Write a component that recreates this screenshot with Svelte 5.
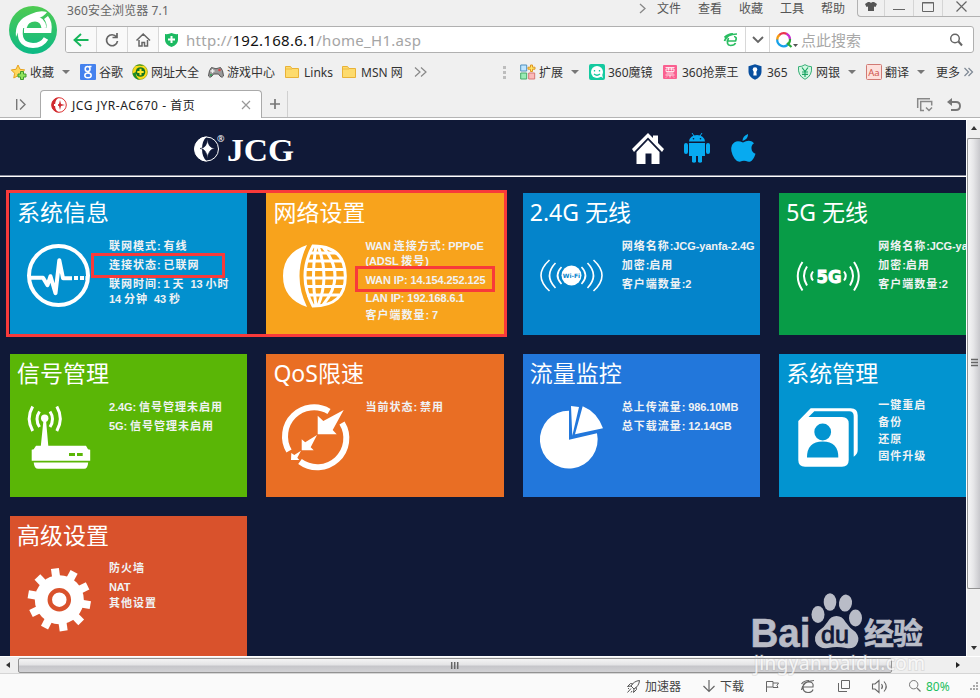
<script>
  let menus = ['文件', '查看', '收藏', '工具', '帮助'];

  let leftMarks = [
    { icon: 'star', label: '收藏', caret: true },
    { icon: 'google', label: '谷歌' },
    { icon: 'sites', label: '网址大全' },
    { icon: 'game', label: '游戏中心' },
    { icon: 'folder', label: 'Links' },
    { icon: 'folder', label: 'MSN 网' },
  ];

  let rightMarks = [
    { icon: 'ext', label: '扩展', caret: true },
    { icon: 'mirror', label: '360魔镜' },
    { icon: 'ticket', label: '360抢票王' },
    { icon: 'lock', label: '365' },
    { icon: 'bank', label: '网银', caret: true },
    { icon: 'trans', label: '翻译', caret: true },
  ];

  // each line is [text, space above it]
  let tiles = [
    { icon: 'pulse', title: '系统信息', color: '#0290ce', lines: [['联网模式: 有线', 3], ['连接状态: 已联网', 4], ['联网时间: 1 天  13 小时', 4], ['14 分钟  43 秒', 0]] },
    { icon: 'globe', title: '网络设置', color: '#f8a31c', lines: [['WAN 连接方式: PPPoE', 3], ['(ADSL 拨号)', 0], ['WAN IP: 14.154.252.125', 4], ['LAN IP: 192.168.6.1', 3], ['客户端数量: 7', 2]] },
    { icon: 'wifi', title: '2.4G 无线', color: '#0484cb', lines: [['网络名称:JCG-yanfa-2.4G', 3], ['加密:启用', 4], ['客户端数量:2', 4]] },
    { icon: 'five', title: '5G 无线', color: '#089c47', lines: [['网络名称:JCG-yanfa-5G', 3], ['加密:启用', 4], ['客户端数量:2', 4]] },
    { icon: 'router', title: '信号管理', color: '#5ab606', lines: [['2.4G: 信号管理未启用', 3], ['5G: 信号管理未启用', 4]] },
    { icon: 'qos', title: 'QoS限速', color: '#e96e24', lines: [['当前状态: 禁用', 3]] },
    { icon: 'pie', title: '流量监控', color: '#2277db', lines: [['总上传流量: 986.10MB', 3], ['总下载流量: 12.14GB', 4]] },
    { icon: 'user', title: '系统管理', color: '#0294d0', lines: [['一键重启', 1], ['备份', 2], ['还原', 2], ['固件升级', 2]] },
    { icon: 'gear', title: '高级设置', color: '#d9522c', lines: [['防火墙', 2], ['NAT', 4], ['其他设置', 1]] },
  ];

  let teeth = Array.from({ length: 10 }, (_, i) => i * 36 - 8);

  // chinese runs get wider tracking than latin ones
  function runs(text) {
    return text.split(/([\u4e00-\u9fff]+)/).filter(Boolean);
  }

  function isHan(s) {
    return /[\u4e00-\u9fff]/.test(s);
  }
</script>

<style>
  :global(body) {
    margin: 0;
    font: 12px "Noto Sans", "Noto Sans CJK SC", sans-serif;
  }

  svg {
    display: block;
    flex: none;
    overflow: visible;
  }

  .window {
    display: flex;
    flex-direction: column;
    width: 980px;
    height: 698px;
    overflow: hidden;
    background: #f0f0f0;
    color: #333;
  }

  .top {
    display: flex;
    height: 58px;
  }

  .brand {
    padding: 6px 8px 0 9px;
  }

  .top-main {
    flex: 1;
  }

  .titlebar {
    display: flex;
    height: 26px;
    color: #6b6b6b;
    line-height: 17px;
  }

  .app-name {
    margin: 2px auto 0 2px;
    letter-spacing: 0.1px;
    color: #666;
  }

  .menus {
    display: flex;
    gap: 17px;
    color: #555;
  }

  .menus svg {
    margin: 4px -6px 0 0;
  }

  .controls {
    display: grid;
    grid-template-columns: 27px 29px 29px 37px;
    height: 16px;
    margin-left: 12px;
    border: solid #b2b2b2;
    border-width: 0 0 1px 1px;
    border-radius: 0 0 0 4px;
  }

  .controls span {
    display: flex;
    justify-content: center;
    border-right: 1px solid #d5d5d5;
  }

  .controls span:last-child {
    border: none;
  }

  .address {
    display: flex;
    align-items: center;
    box-sizing: border-box;
    width: 909px;
    height: 27px;
    overflow: hidden;
    border: 1px solid #b0b0b0;
    border-radius: 3px;
    background: #fff;
  }

  .nav {
    display: flex;
    align-items: center;
    justify-content: center;
    width: 30px;
    height: 25px;
    border-right: 1px solid #d8d8d8;
    background: #f9f9f9;
  }

  .shield {
    margin: 0 8px 0 6px;
  }

  .url {
    flex: 1;
    color: #a5a5a5;
    font-size: 15px;
    letter-spacing: 0.28px;
    white-space: nowrap;
  }

  .url b {
    color: #111;
    font-weight: normal;
  }

  .drop {
    display: flex;
    align-items: center;
    justify-content: center;
    width: 23px;
    height: 25px;
    margin: 0 6px 0 5px;
    border: solid #d8d8d8;
    border-width: 0 1px;
  }

  .search {
    width: 149px;
    margin-left: 6px;
    color: #a8a8a8;
    font-size: 15px;
  }

  .address .find {
    margin-right: 11px;
  }

  .marks {
    display: flex;
    justify-content: space-between;
    height: 32px;
    padding: 0 6px 0 11px;
  }

  .group {
    display: grid;
    align-items: center;
    height: 28px;
    white-space: nowrap;
  }

  .left {
    grid-template-columns: 69px 52px 76px 77px 57px 72px 16px;
  }

  .right {
    grid-template-columns: 18px 69px 74px 85px 49px 69px 70px 38px;
  }

  .mark {
    display: flex;
    align-items: center;
    gap: 3px;
  }

  .caret {
    margin-left: 5px;
    border: 4px solid transparent;
    border-top-color: #777;
    border-bottom: none;
  }

  .more {
    display: flex;
    align-items: center;
    gap: 4px;
  }

  .tabs {
    display: flex;
    align-items: flex-end;
    height: 27px;
    border-bottom: 1px solid #b4b4b4;
    box-shadow: 0 2px #fff;
    margin-bottom: 2px;
  }

  .tabs > svg {
    align-self: center;
    position: relative;
    top: 1px;
  }

  .side {
    margin: 0 14px 0 16px;
  }

  .undo {
    margin: 0 19px 0 14px;
  }

  .tab {
    display: flex;
    align-items: center;
    box-sizing: border-box;
    width: 222px;
    height: 28px;
    margin-bottom: -1px;
    padding: 0 11px 0 10px;
    border: 1px solid #aaa;
    border-bottom: none;
    border-radius: 4px 4px 0 0;
    background: #fff;
    color: #222;
  }

  .tab span {
    flex: 1;
    margin-left: 5px;
    letter-spacing: 0.54px;
    white-space: nowrap;
  }

  .plus {
    display: flex;
    align-items: center;
    justify-content: center;
    width: 25px;
    height: 26px;
    margin-right: auto;
    border-right: 1px solid #d0d0d0;
  }

  .view {
    position: relative;
    display: grid;
    grid-template-columns: 966px 14px;
    height: 536px;
  }

  .page {
    overflow: hidden;
    background: #101937;
  }

  .banner {
    display: flex;
    align-items: center;
    box-sizing: border-box;
    height: 57px;
    padding-left: 193px;
    border-bottom: 1px solid #fff;
    box-shadow: inset 0 -1px #8a8d9d;
  }

  .banner svg {
    margin-right: 20px;
  }

  .banner .logo {
    margin-right: 338px;
  }

  .tiles {
    display: grid;
    grid-template-columns: repeat(4, 237.4px);
    grid-auto-rows: 142.3px;
    gap: 19px;
    padding: 16px 0 0 10px;
  }

  .tile {
    color: #fff;
  }

  .tile h2 {
    margin: 0 0 0 7px;
    height: 50px;
    font-size: 23px;
    font-weight: 400;
    line-height: 39px;
    white-space: nowrap;
  }

  .body {
    display: flex;
    gap: 18px;
    padding-left: 17px;
  }

  .lines {
    margin-top: -7px;
    color: #f0f2f4;
    font: bold 11px "Liberation Sans", "Noto Sans CJK SC", sans-serif;
    letter-spacing: -0.1px;
  }

  .lines div {
    height: 15px;
    line-height: 15px;
    white-space: pre;
  }

  .lines .han {
    letter-spacing: 1px;
  }

  .frame {
    position: absolute;
    box-sizing: border-box;
    border: 3px solid #f83a3a;
  }

  .frame.big {
    left: 6px;
    top: 70px;
    width: 501px;
    height: 147px;
  }

  .frame.state {
    left: 91px;
    top: 133px;
    width: 134px;
    height: 25px;
  }

  .frame.ip {
    left: 355px;
    top: 146px;
    width: 140px;
    height: 26px;
  }

  .watermark {
    position: absolute;
    left: 750px;
    top: 470px;
  }

  .bar {
    display: flex;
    align-items: center;
    justify-content: space-between;
    background: #efefef;
  }

  .vertical {
    flex-direction: column;
    border-left: 1px solid #fff;
  }

  .vertical .thumb {
    box-sizing: border-box;
    width: 13px;
    height: 451px;
    margin: 2px 0 auto;
    border: 1px solid #929292;
    border-right: none;
    border-radius: 2px 0 0 2px;
    background: linear-gradient(90deg, #f6f6f6, #e6e6e8 45%, #c8c8cc);
  }

  .vertical .end {
    margin: 6px 0;
  }

  .horizontal {
    height: 17px;
    border-top: 1px solid #fff;
    box-sizing: border-box;
  }

  .horizontal .thumb {
    box-sizing: border-box;
    width: 874px;
    height: 15px;
    margin: 0 auto 0 8px;
    border: 1px solid #929292;
    border-radius: 2px;
    background: linear-gradient(#f4f4f4, #e4e4e6 45%, #c6c6ca 55%, #d2d2d5);
  }

  .thumb {
    display: flex;
    align-items: center;
    justify-content: center;
  }

  .horizontal > svg:first-child {
    margin-left: 6px;
  }

  .horizontal .end {
    margin-right: 20px;
  }

  .status {
    display: grid;
    grid-template-columns: 76px 63px 35px 37px 34px 37px 61px 11px;
    align-items: center;
    flex: 1;
    padding-left: 627px;
    border-top: 1px solid #d5d5d5;
    background: #fafafa;
    color: #444;
  }

  .status span {
    display: flex;
    align-items: center;
    gap: 5px;
    white-space: nowrap;
  }

  .status .zoom {
    color: #1dbf60;
  }
</style>

{#snippet markIcon(name)}
  <svg width="16" height="16" viewBox="0 0 16 16">
    {#if name === 'star'}
      <path d="M7 1l2 4.300 4.700.6-3.400 3.300.8 4.800L7 11.700 2.800 14l.8-4.800L.3 5.900 5 5.300z" fill="#ffd75e" stroke="#e8a21c" />
      <path d="M9.500 7.500h3v2.500h2.500v3h-2.500v2.500h-3v-2.500H7v-3h2.500z" fill="#8ee35c" stroke="#3c9a2e" />
    {:else if name === 'google'}
      <rect width="16" height="16" rx="1" fill="#4582ee" />
      <g fill="none" stroke="#fff" stroke-width="1.500">
        <ellipse cx="7.600" cy="5" rx="2.400" ry="2.500" />
        <ellipse cx="8" cy="11.400" rx="3.200" ry="2.300" />
        <path d="M7.500 7.500l1.500 1.800M9 2.500h2.500" />
      </g>
    {:else if name === 'sites'}
      <circle cx="8" cy="8" r="7.500" fill="#f9dc16" stroke="#7c9a1a" stroke-width=".6" />
      <path d="M.6 9.500A7.800 7.800 0 0 0 8 15.700Q3 13 4 8zM3 2a7.800 7.800 0 0 1 9 0Q7 1 3 2" fill="#1c8e26" />
      <circle cx="8.500" cy="8" r="4.800" fill="#147422" />
      <path d="M8.500 4.800v6.400M5.300 8h6.400" stroke="#ffe92a" stroke-width="2" />
    {:else if name === 'game'}
      <path d="M3.500 3.500Q8 6 12.500 3.500q2.500 2 3 8.500-2 3-5-2h-5q-3 5-5 2 .5-6.500 3-8.500" fill="#999" stroke="#555" />
      <path d="M4.500 5v4M2.500 7h4" stroke="#eee" stroke-width="1.300" />
      <circle cx="11.500" cy="6" r="1.300" fill="#d84747" /><circle cx="3" cy="11" r="1" fill="#2d9e52" />
    {:else if name === 'folder'}
      <path d="M.5 2.500h5l1.500 2h6.500v9H.5z" fill="#fddb6d" stroke="#e9b237" />
      <path d="M1 5h6" stroke="#efbb43" />
    {:else if name === 'ext'}
      <path d="M.7 1h6v6h-6z" fill="#bfe5ff" stroke="#4e8fbd" />
      <path d="M.7 9h6v6h-6z" fill="#9aebb5" stroke="#44aa68" />
      <path d="M8.700 9h6v6h-6z" fill="#fbbaba" stroke="#d77676" />
      <path d="M10.500 1h2v2.200H15v2h-2.500V7.500h-2V5.200H8v-2h2.500z" fill="#ffe866" stroke="#df9520" />
    {:else if name === 'mirror'}
      <rect width="16" height="16" rx="2" fill="#15caa0" />
      <circle cx="8" cy="8" r="6" fill="#fff" /><path d="M11 12l3 2-1-4" fill="#fff" />
      <path d="M5.500 6v1.500M10.500 6v1.500M5 10q3 2.500 6 0" fill="none" stroke="#15caa0" stroke-width="1.300" />
    {:else if name === 'ticket'}
      <rect x="0" y="1" width="14" height="14" rx="1" fill="#fa6090" />
      <path d="M2.500 3.500h9M5.500 3.500v3M8.500 3.500v3M3 5h8v2.500H3zM3.500 9h7M2.500 11h9M7 11v2.500M4 12.500l-1 1M10 12.500l1 1" fill="none" stroke="#ffe4ec" />
    {:else if name === 'lock'}
      <path d="M7 .3l6.500 1.900V8q0 5-6.500 7.700Q.5 13 .5 8V2.200z" fill="#084f9f" />
      <circle cx="7" cy="5.600" r="2.300" fill="#fff" /><path d="M5.800 7h2.400l.5 4.500H5.300z" fill="#fff" />
    {:else if name === 'bank'}
      <path d="M8 .7q3 2 6.500 2 1 9-6.500 12.600Q.5 11.700 1.500 2.700 5 2.700 8 .7z" fill="#d3f6e2" stroke="#37b077" />
      <path d="M5 3.500L8 7.500l3-4M8 7.500V13M5 8h6M5 10.300h6" fill="none" stroke="#1ba664" stroke-width="1.200" />
    {:else if name === 'trans'}
      <rect x=".5" y=".5" width="15" height="15" rx="1" fill="#fde0dc" stroke="#d17a74" />
      <text x="8" y="11.500" text-anchor="middle" font-size="9.500" fill="#d0544c">Aa</text>
    {/if}
  </svg>
{/snippet}

{#snippet tileIcon(name)}
  <svg width="64" height="66" viewBox="0 0 64 66" fill="#fff" stroke="none">
    {#if name === 'pulse'}
      <g fill="none" stroke="#fff" stroke-width="4">
        <circle cx="31.500" cy="32.500" r="29.500" />
        <path d="M3 34.700h13l4.500 7.500 3-9 5 17 3.800-33 3.700 18h9" stroke-linejoin="round" />
        <path d="M47 35h4M53 35h4M58.500 35h3" />
      </g>
    {:else if name === 'globe'}
      <path d="M24 2Q0 10 0 33t24 31Q9 33 24 2z" />
      <g fill="none" stroke="#fff" stroke-width="3">
        <path d="M30 3Q62 3 62.300 33T30 63Q14 33 30 3zM33 3q-5 30 0 60M35 3q12 30 0 60M40 4q24 29 0 58" />
        <path d="M26 10h27M23 18h36M22 26.500h40M21 35h41M22 43.500h38M24 52h32" />
      </g>
    {:else if name === 'wifi'}
      <circle cx="31.500" cy="32.500" r="10" />
      <text x="31.500" y="35" text-anchor="middle" font-size="6" font-weight="bold" fill="#0484cb" font-family="DejaVu Sans">Wi-Fi</text>
      <g fill="none" stroke="#fff" stroke-width="1.600">
        <path d="M21.500 24q-8 8.500 0 17M41.500 24q8 8.500 0 17" />
        <path d="M15.500 20q-12 12.500 0 25M47.500 20q12 12.500 0 25" />
        <path d="M9.500 17q-17 15.500 0 31M53.500 17q17 15.500 0 31" />
      </g>
    {:else if name === 'five'}
      <text x="33" y="39.500" text-anchor="middle" font-size="18" font-weight="bold" font-family="DejaVu Sans" stroke="#fff" stroke-width="1" textLength="25" lengthAdjust="spacingAndGlyphs">5G</text>
      <g fill="none" stroke="#fff" stroke-width="2">
        <path d="M17 28.500q-3.500 4.500 0 9M48 28.500q3.500 4.500 0 9" />
        <path d="M11 23.500q-6 9 0 19M54 23.500q6 9 0 19" />
        <path d="M6.500 19q-9.500 14 0 28.500M58 19q9.500 14 0 28.500" />
      </g>
    {:else if name === 'router'}
      <circle cx="17.700" cy="14.300" r="3.700" />
      <path d="M16.500 16h2.500l2.300 26h-7.500zM9 41.700h50l2 3.500 2.200.5v11H4.700v-11l2-.5zM6.700 58.500h54.500q-.5 6.300-4 6.300h-46q-4 0-4.500-6.300z" />
      <path d="M42 49h6v3h-6zM50 49h5.700v3H50z" fill="#5ab606" />
      <path d="M12.500 7.500q-5 7.500 0 15.500M23 7.500q5 7.500 0 15.500M5.700 2.500q-7 12 0 24.500M29.800 2.500q7 12 0 24.500" fill="none" stroke="#fff" stroke-width="3" />
    {:else if name === 'qos'}
      <path d="M6 47A29 29 0 0 1 46 7.500M59 19A29 29 0 0 1 17 57.500" fill="none" stroke="#fff" stroke-width="6" />
      <path d="M60.700 6l-11 20 4 4.300h-19V11.700l5.600 5.300zM34 31l-6.300 12.300 3 3h-12v-11l3.500 3zM18 46.700l-3.700 7 2 2.300H8l.3-7 3 2z" />
    {:else if name === 'pie'}
      <path d="M29 35.700v-29A28.900 28.900 0 1 0 57 29.300zM31 2l8 1-6.700 28.700zM42.700 2.300Q57 8 63 24.300l-28 6z" />
    {:else if name === 'user'}
      <path d="M2.300 17L14.700 4.300h40q7 0 7 7V46q0 4-4 6.700V12q0-4.700-4.500-4.700H18.300L12.500 13H46q6.700 0 6.700 6.500V56q0 6.700-6.700 6.700H9q-6.700 0-6.700-6.700z" />
      <path d="M11 53.500q0-16 15.700-16t15.600 16z" fill="#0294d0" />
      <circle cx="26.700" cy="28" r="8.400" fill="#0294d0" />
    {:else if name === 'gear'}
      <g transform="translate(32.300 33.700)">
        {#each teeth as angle}
          <rect x="-4" y="-31.500" width="8" height="12" transform="rotate({angle})" />
        {/each}
        <circle r="24.500" />
        <circle r="9.500" fill="none" stroke="#d9522c" stroke-width="4.500" />
      </g>
    {/if}
  </svg>
{/snippet}

{#snippet mark(item)}
  <div class="mark">
    {@render markIcon(item.icon)}
    {item.label}
    {#if item.caret}<i class="caret"></i>{/if}
  </div>
{/snippet}

<div class="window">
  <div class="top">
    <div class="brand">
      <svg width="48" height="48" viewBox="0 0 48 48">
        <defs>
          <linearGradient id="leaf" x1="0" y1="0" x2="0" y2="1">
            <stop offset="0" stop-color="#4fcb51" />
            <stop offset="1" stop-color="#0bb986" />
          </linearGradient>
        </defs>
        <circle cx="24" cy="24" r="24" fill="url(#leaf)" />
        <path d="M15 22q2-9 11-9 8 0 9 9M15 24.500h25q1-8-3-13M12 20q-4 19 12 19.500 9 0 13-7" fill="none" stroke="#fff" stroke-width="5" />
        <path d="M7 31Q5 14 22 8q8-4 16-2-3 5-11 7-14 2-20 18z" fill="#fff" />
      </svg>
    </div>
    <div class="top-main">
      <div class="titlebar">
        <span class="app-name">360安全浏览器 7.1</span>
        <div class="menus">
          <svg width="6" height="10" viewBox="0 0 6 10"><path d="M0 0l5 4.500L0 9" fill="none" stroke="#888" stroke-width="1.300" /></svg>
          {#each menus as item}
            <span>{item}</span>
          {/each}
        </div>
        <div class="controls">
          <span><svg width="12" height="16" viewBox="0 0 12 16"><path d="M3 2h1.500Q6 3.500 7.500 2H9l3 2-1.500 3L9 6.500V11H3V6.500L1.500 7 0 4z" fill="#555" /></svg></span>
          <span><svg width="12" height="16" viewBox="0 0 12 16"><path d="M0 9.500h12" stroke="#666" /></svg></span>
          <span><svg width="12" height="16" viewBox="0 0 12 16"><path d="M.5 2.500h11v9H.5zM0 3h12" fill="none" stroke="#666" /></svg></span>
          <span><svg width="11" height="16" viewBox="0 0 11 16"><path d="M.5 1.500l10 10M10.500 1.500l-10 10" stroke="#666" stroke-width="1.200" /></svg></span>
        </div>
      </div>
      <div class="address">
        <div class="nav"><svg width="16" height="14" viewBox="0 0 16 14"><path d="M15.500 7H1.500M8 1L1.500 7 8 13" fill="none" stroke="#17b55b" stroke-width="1.900" /></svg></div>
        <div class="nav"><svg width="14" height="14" viewBox="0 0 14 14"><path d="M11.500 4A5.500 5.500 0 1 0 12.500 8M12 0v4.500H7.500" fill="none" stroke="#666" stroke-width="1.700" /></svg></div>
        <div class="nav"><svg width="14" height="14" viewBox="0 0 14 14"><path d="M3 7v6h3V9.500h2.500V13h3V7M.5 7.500L7.200 1 14 7.500" fill="none" stroke="#666" stroke-width="1.500" /></svg></div>
        <svg class="shield" width="13" height="14" viewBox="0 0 13 14"><path d="M0 1q3.500.5 6.500-1Q9.500 1.500 13 1v6q0 4.500-6.500 7Q0 11.500 0 7z" fill="#1dba62" /><path d="M6.500 3v7M3 6.500h7" stroke="#fff" stroke-width="2" /></svg>
        <span class="url">http://<b>192.168.6.1</b>/home_H1.asp</span>
        <svg width="16" height="14" viewBox="0 0 16 14"><path d="M.5 8Q3 1 13 1M.5 4.500Q5 .5 9 1M2.500 8h9q2-4-1.500-4.500M4.500 5q-3 7 2 7.500 4 0 5-2.500" fill="none" stroke="#2bbd62" stroke-width="1.700" /></svg>
        <div class="drop"><svg width="12" height="8" viewBox="0 0 12 8"><path d="M1 1l5 5 5-5" fill="none" stroke="#666" stroke-width="1.900" /></svg></div>
        <svg width="19" height="16" viewBox="0 0 19 16">
          <g fill="none" stroke-width="2.200">
            <path d="M1.200 8A6.500 6.500 0 0 1 4 2.500" stroke="#f59b12" />
            <path d="M3.500 2.800A6.500 6.500 0 0 1 11 2" stroke="#e9344d" />
            <path d="M10.500 1.800A6.500 6.500 0 0 1 14 7.500" stroke="#c82ed0" />
            <path d="M14 7A6.500 6.500 0 0 1 11 13M11 11l4.500 4" stroke="#29a93b" />
            <path d="M11.500 13A6.500 6.500 0 0 1 1.200 7.500" stroke="#16a1e8" />
          </g>
          <path d="M17 12h5l-2.500 3z" fill="#555" />
        </svg>
        <span class="search">点此搜索</span>
        <svg class="find" width="12" height="13" viewBox="0 0 12 13"><path d="M8.500 8.500l3.500 4" stroke="#666" stroke-width="2" /><circle cx="5" cy="5.500" r="4.300" fill="none" stroke="#666" stroke-width="1.500" /></svg>
      </div>
    </div>
  </div>

  <div class="marks">
    <div class="group left">
      {#each leftMarks as item}
        {@render mark(item)}
      {/each}
      <svg width="13" height="10" viewBox="0 0 13 10"><path d="M1 .5l5 4.500-5 4.500M7 .5l5 4.500-5 4.500" fill="none" stroke="#888" stroke-width="1.200" /></svg>
    </div>
    <div class="group right">
      <svg width="4" height="14" viewBox="0 0 4 14"><path d="M1 1h3v3H1zM1 6h3v3H1zM1 11h3v3H1z" fill="#bdbdbd" /></svg>
      {#each rightMarks as item}
        {@render mark(item)}
      {/each}
      <div class="more">更多<svg width="9" height="8" viewBox="0 0 9 8"><path d="M.5 0l4 4-4 4M4.500 0l4 4-4 4" fill="none" stroke="#7d8793" stroke-width="1.200" /></svg></div>
    </div>
  </div>

  <div class="tabs">
    <svg class="side" width="10" height="11" viewBox="0 0 10 11"><path d="M.7 0v11M4 .5l5 5-5 5" fill="none" stroke="#777" stroke-width="1.400" /></svg>
    <div class="tab">
      <svg width="16" height="16" viewBox="0 0 16 16"><circle cx="8" cy="8" r="7.300" fill="#fff" stroke="#d33" /><path d="M8 .5a7.500 7.500 0 0 0 0 15q-4-2-4-7.500T8 .5" fill="#d02b30" /><path d="M9 3l1 4 4 1-4 1-1 4-1-4-4-1 4-1z" fill="#d02b30" /><path d="M7 7H3v2h4z" fill="#fff" /></svg>
      <span>JCG JYR-AC670 - 首页</span>
      <svg width="8" height="8" viewBox="0 0 8 8"><path d="M0 0l8 8M8 0L0 8" stroke="#999" stroke-width="1.200" /></svg>
    </div>
    <div class="plus"><svg width="10" height="10" viewBox="0 0 10 10"><path d="M0 5h10M5 0v10" stroke="#777" stroke-width="1.700" /></svg></div>
    <svg width="16" height="14" viewBox="0 0 16 14"><path d="M.7 10V.7H13M7 12.500H3.700v-9h11v4M9 9.500l3 3 3-3" fill="none" stroke="#888" stroke-width="1.500" /></svg>
    <svg class="undo" width="14" height="13" viewBox="0 0 14 13"><path d="M2 4h7q4 0 4 4t-4 4H4" fill="none" stroke="#777" stroke-width="1.900" /><path d="M5 0v8L0 4z" fill="#777" /></svg>
  </div>

  <div class="view">
    <div class="page">
      <div class="banner">
        <svg class="logo" width="101" height="30" viewBox="0 0 101 30">
          <circle cx="13.500" cy="16" r="12" fill="none" stroke="#fff" />
          <path d="M14 3.500a12.500 12.500 0 0 0 0 25q-5-4-5-12.500t5-12.500" fill="#fff" />
          <path d="M14.500 6q.5 9 7.500 9.500-7 .5-7.500 10.500Q14 16 7 15.500 14 15 14.500 6z" fill="#fff" stroke="#101937" stroke-width=".6" />
          <text x="24" y="9" font-size="9" fill="#fff">®</text>
          <text x="34" y="27.500" font-size="32" font-weight="bold" font-family="Liberation Serif" fill="#fff" textLength="67" lengthAdjust="spacingAndGlyphs">JCG</text>
        </svg>
        <svg width="32" height="31" viewBox="0 0 32 31" fill="#fff"><path d="M16 0l5 5V2.500h5V10l6 6-2 3L16 4.500 2 19l-2-3z" /><path d="M16 7l11.500 12v12h-8V20.500h-6V31h-9V19z" /></svg>
        <svg width="26" height="30" viewBox="0 0 26 30" fill="#07aaf0">
          <path d="M5 8.500Q6 2 13 2t8 6.500zM5 10h16v13H5zM8 22h4v7q-2 1.500-4 0zM14 22h4v7q-2 1.500-4 0z" />
          <rect x="0" y="10" width="4" height="11" rx="2" /><rect x="22" y="10" width="4" height="11" rx="2" />
          <path d="M8 0l2 3M18 0l-2 3" stroke="#07aaf0" />
          <circle cx="9.500" cy="5.800" r=".8" fill="#101937" /><circle cx="16.500" cy="5.800" r=".8" fill="#101937" />
        </svg>
        <svg width="26" height="28" viewBox="0 0 25 28" fill="#07aaf0"><path d="M17.500 0q.5 5-5.500 7 0-5 5.500-7zM12.500 8.500q5-3 9-1l2 1.700q-3 2-2.500 5.500.3 3.500 4 5-2 6.500-5.500 8-2 .5-4-.6-2-.8-4 0Q7 29 4 24.500q-5-8-2.500-13.500Q5 5 12.500 8.500z" /></svg>
      </div>
      <div class="tiles">
        {#each tiles as tile}
          <div class="tile" style:background={tile.color}>
            <h2>{tile.title}</h2>
            <div class="body">
              {@render tileIcon(tile.icon)}
              <div class="lines">
                {#each tile.lines as [text, gap]}
                  <div style:margin-top="{gap}px">{#each runs(text) as part}<span class:han={isHan(part)}>{part}</span>{/each}</div>
                {/each}
              </div>
            </div>
          </div>
        {/each}
      </div>
    </div>
    <div class="bar vertical">
      <svg class="end" width="6" height="4" viewBox="0 0 6 4"><path d="M0 4l3-4 3 4z" fill="#333" /></svg>
      <div class="thumb"><svg width="7" height="9" viewBox="0 0 7 9"><path d="M0 .5h7M0 3.500h7M0 6.500h7" stroke="#666" stroke-width="1.500" /></svg></div>
      <svg class="end" width="6" height="4" viewBox="0 0 6 4"><path d="M0 0h6L3 4z" fill="#333" /></svg>
    </div>

    <div class="frame big"></div>
    <div class="frame state"></div>
    <div class="frame ip"></div>

    <svg class="watermark" width="180" height="90" viewBox="750 590 180 90">
      <g fill="#b9bcc7" font-weight="bold">
        <text x="750.500" y="647" font-size="40" font-family="Liberation Sans" textLength="60" lengthAdjust="spacingAndGlyphs" stroke="#b9bcc7" stroke-width=".6">Bai</text>
        <ellipse cx="818" cy="614.500" rx="6.500" ry="8.500" />
        <ellipse cx="830" cy="602" rx="6.300" ry="8.800" />
        <ellipse cx="845.500" cy="603" rx="6.500" ry="8.500" transform="rotate(8 845 603)" />
        <ellipse cx="855.500" cy="618" rx="6.500" ry="8.500" />
        <path d="M836.500 616q6 0 9 6 4 6 10 10 5 6 1.500 12-3 5.500-11 4-9-2-18 0-8 1-11.500-4-4-7 2-13 6-4 9-9 3-6 9-6z" />
        <text x="821" y="643" font-size="24" font-weight="normal" font-family="Liberation Sans" fill="#101937" stroke="#101937" stroke-width=".8" textLength="28" lengthAdjust="spacingAndGlyphs">du</text>
        <text x="864" y="644" font-size="30" font-family="Noto Sans CJK SC" textLength="59" stroke="#b9bcc7" stroke-width=".6">经验</text>
      </g>
      <text x="754" y="670" font-size="19" fill="#fff" fill-opacity=".8" stroke="#aaa" stroke-opacity=".25" stroke-width="2" paint-order="stroke" textLength="171">jingyan.baidu.com</text>
    </svg>
  </div>

  <div class="bar horizontal">
    <svg width="4" height="6" viewBox="0 0 4 6"><path d="M4 0v6L0 3z" fill="#333" /></svg>
    <div class="thumb"><svg width="8" height="7" viewBox="0 0 8 7"><path d="M.7 0v7M3.700 0v7M6.700 0v7" stroke="#666" stroke-width="1.500" /></svg></div>
    <svg class="end" width="4" height="6" viewBox="0 0 4 6"><path d="M0 0v6l4-3z" fill="#222" /></svg>
  </div>

  <div class="status">
    <span><svg width="13" height="13" viewBox="0 0 13 13"><path d="M12.500.5Q7 1 4 6l3 3q5-3 5.500-8.500zM4 6L.5 6.500l3-3L6 4M7 9l-.5 3.500 3-3L9 7M4 8.500L.5 12.500M2 8l-1 1M5 11l-1 1.500" fill="none" stroke="#555" /></svg>加速器</span>
    <span><svg width="12" height="12" viewBox="0 0 12 12"><path d="M6 0v11M.5 6L6 11.500 11.500 6" fill="none" stroke="#666" stroke-width="1.200" /></svg>下载</span>
    <svg width="13" height="11" viewBox="0 0 13 11"><path d="M.5 11V.5H7V6H.5M7 2h5.500L11 4.500l1 2H7" fill="none" stroke="#666" /></svg>
    <svg width="14" height="13" viewBox="0 0 14 13"><path d="M2 7h10q1-5-4-5-6 0-6 5 0 5.500 5 5.500 4 0 5-3M.5 10Q2 1 13 .5M.5 4Q3 .5 8 .5" fill="none" stroke="#666" stroke-width="1.200" /></svg>
    <svg width="12" height="12" viewBox="0 0 12 12"><path d="M3.500.5h8v8h-8zM.5 3v8.500H9" fill="none" stroke="#666" /></svg>
    <svg width="16" height="13" viewBox="0 0 16 13"><path d="M.5 4H3l4-3.500v12L3 9H.5zM9.500 4q2 2.500 0 5M12 1.500q4.500 5 0 10" fill="none" stroke="#666" stroke-width="1.100" /></svg>
    <span class="zoom"><svg width="12" height="12" viewBox="0 0 12 12"><path d="M8 8l3.500 3.500" stroke="#777" stroke-width="1.300" /><circle cx="4.700" cy="4.700" r="4.200" fill="none" stroke="#777" /></svg>80%</span>
    <svg width="9" height="9" viewBox="0 0 9 9"><path d="M6 0h2v2H6zM3 3h2v2H3zM6 3h2v2H6zM0 6h2v2H0zM3 6h2v2H3zM6 6h2v2H6z" fill="#aaa" /></svg>
  </div>
</div>
